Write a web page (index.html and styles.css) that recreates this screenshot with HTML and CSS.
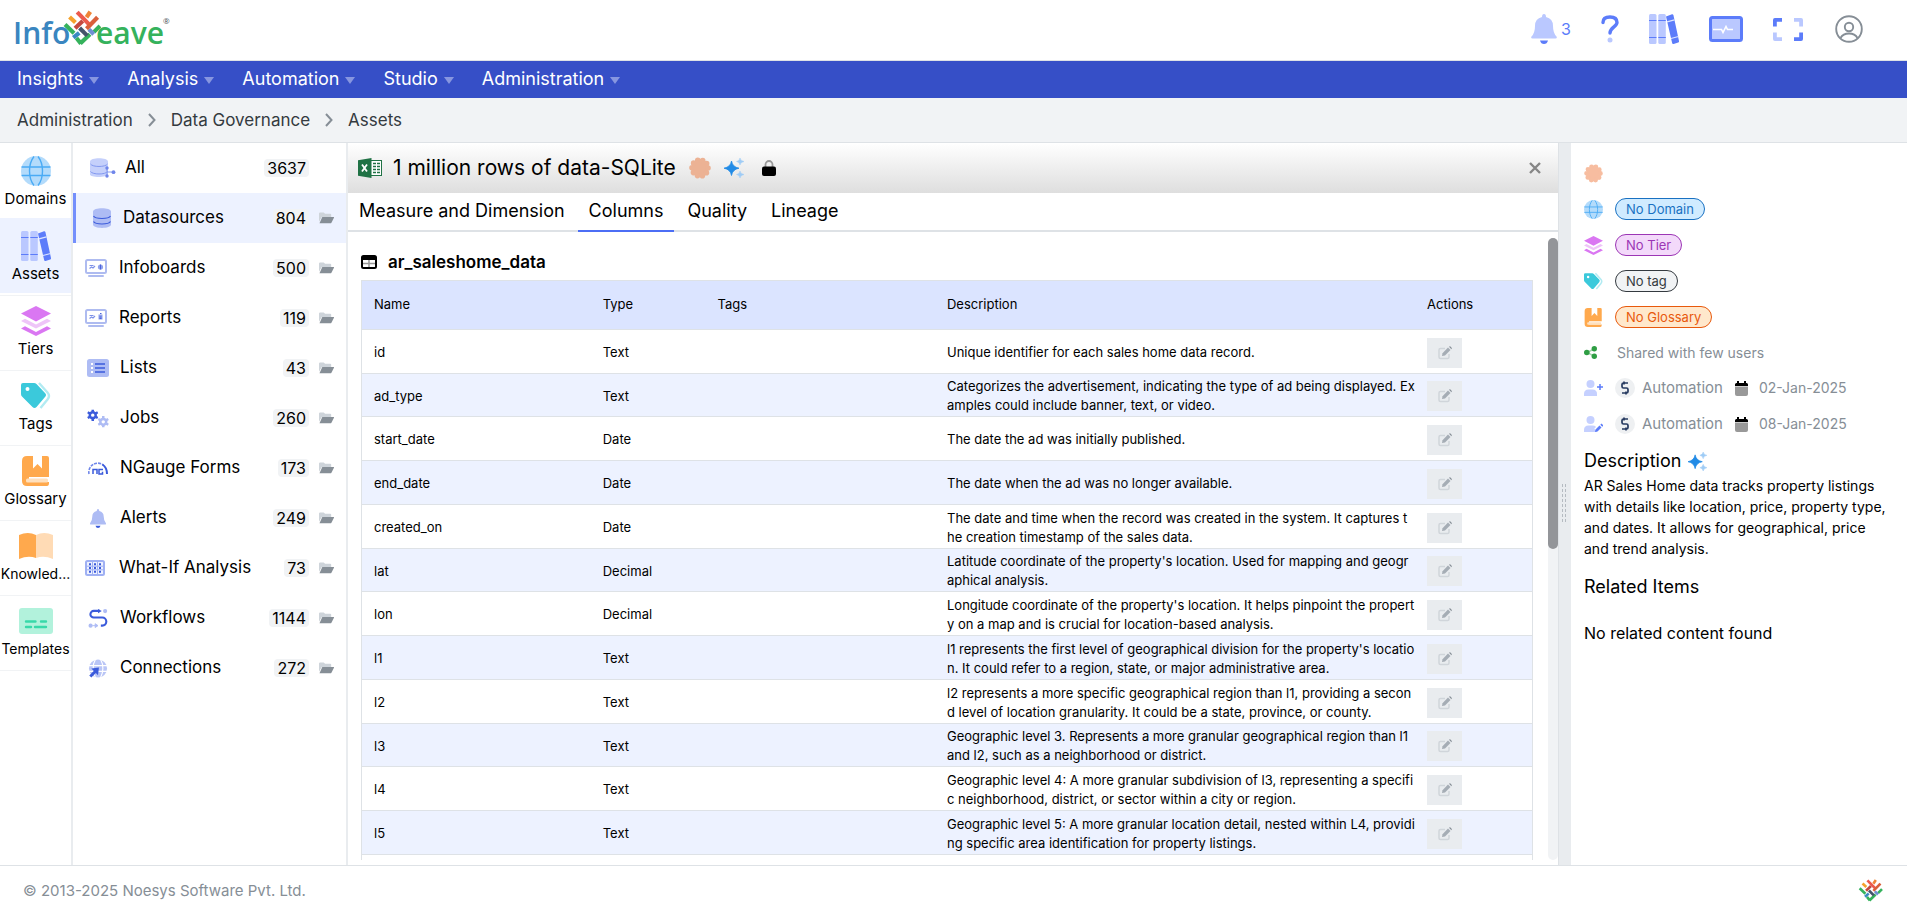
FILE: index.html
```html
<!DOCTYPE html>
<html lang="en">
<head>
<meta charset="utf-8">
<title>Infoveave - Assets</title>
<link rel="stylesheet" href="styles.css">
</head>
<body>
<svg class="sprite" aria-hidden="true">
  <symbol id="weave" viewBox="166 20 108 104">
    <g fill="none" stroke-width="12">
      <path stroke="#f5a12c" d="M184 40l17 16"/>
      <path stroke="#ec5a4c" d="M206 26l36 37"/>
      <path stroke="#ef8536" d="M244 25l-11 16"/>
      <path stroke="#d9603b" d="M265 41l-32 33"/>
      <path stroke="#c4483f" d="M222 52l-22 21"/>
      <path stroke="#35b25c" d="M171 62l26 25"/>
      <path stroke="#35b25c" d="M272 66l-18 18M204 101l13 16M243 90l-28 27"/>
      <path stroke="#44546a" d="M213 72l22 22"/>
      <path stroke="#3a8ac2" d="M212 86l-17 14"/>
      <path stroke="#6f8fd2" d="M240 76l14 14"/>
    </g>
  </symbol>
  <symbol id="globe" viewBox="0 0 30 30">
    <circle cx="15" cy="15" r="15" fill="#b3dbfb"/>
    <path d="M0.5 11h29M0.5 19.500h29M13 .5C7 8 7 22 13 29.500M17 .5c6 7.500 6 21.500 0 29" fill="none" stroke="#4aabf5" stroke-width="1.400"/>
  </symbol>
  <symbol id="books" viewBox="0 0 30 30">
    <g fill="var(--soft)"><rect x="0" y="0" width="7.500" height="30" rx="1.500"/><rect x="9.300" y="0" width="7.500" height="30" rx="1.500"/></g>
    <path d="M0 6.500h7.500M9.300 6.500h7.500M0 23.500h7.500M9.300 23.500h7.500" stroke="var(--strong)" stroke-width="1.200"/>
    <path d="M17 2.600L23 .3q1-.3 1.400.8L30 27q.2 1.200-.8 1.500L24.600 30q-1 .2-1.400-.8z" fill="var(--strong)"/>
    <path d="M18 7.800l7.500-2M22 24.500l7.500-2" stroke="#dbe4ff" stroke-width="1.200"/>
  </symbol>
  <symbol id="layers" viewBox="0 0 30 30">
    <path d="M0 22.500l4-2.300L15 26l11-5.800 4 2.300L15 30z" fill="#da77f2"/>
    <path d="M0 15l4-2.300 11 5.800 11-5.800 4 2.300-15 7.500z" fill="#eec5f8"/>
    <path d="M15 0l15 7.500L15 15.500 0 7.500z" fill="#da77f2"/>
  </symbol>
  <symbol id="tags" viewBox="0 0 30 30">
    <path d="M18 2l8.500 9.500q3 3.500 0 7L19.500 27" fill="none" stroke="#b2ebf2" stroke-width="2.400"/>
    <path fill-rule="evenodd" d="M2 2h11q1.500 0 2.500 1l8.500 9q2 2 0 4L15.500 26q-2 2-4 0L1 15.500Q0 14.500 0 13V4q0-2 2-2zm4.500 4a2 2 0 100 4 2 2 0 000-4z" fill="#3bc9db"/>
  </symbol>
  <symbol id="glossary" viewBox="0 0 30 30">
    <path d="M6 0h6v12.500l4.500-4.500 4.500 4.500V0h5q2 0 2 2v19H8v5h20v1q0 3-2 3H6q-5 0-5-5V5q0-5 5-5z" fill="#ffa94d"/>
    <rect x="5" y="22.500" width="22" height="4" rx="1.500" fill="#ffe0bd"/>
  </symbol>
  <symbol id="openbook" viewBox="0 0 34 26">
    <path d="M0 2Q9-2 17 2v23Q9 22 0 26z" fill="#ffa94d"/><path d="M17 2q8-4 17 0v24q-9-4-17-1z" fill="#ffdbb5"/>
  </symbol>
  <symbol id="template" viewBox="0 0 34 26">
    <rect width="34" height="26" rx="3" fill="#b2f2dc"/>
    <path d="M7 13.500h9.500M22 13.500h5M7 19h5M16 19h11" stroke="#38d9a9" stroke-width="2.400" stroke-linecap="round"/>
  </symbol>
  <symbol id="db" viewBox="0 0 18 20">
    <path d="M0 3.500C0-1 18-1 18 3.500v13c0 4.500-18 4.500-18 0z" fill="var(--soft)"/>
    <path d="M.5 8c2 3.300 15 3.300 17 0M.5 13.500c2 3.300 15 3.300 17 0" fill="none" stroke="var(--strong)" stroke-width="1.200"/>
  </symbol>
  <symbol id="dball" viewBox="0 0 26 20">
    <path d="M0 3.500C0-1 18-1 18 3.500v13c0 3-18 3.500-18 0z" fill="#c5d0fb"/>
    <path d="M.5 6c2 3.300 15 3.300 17 0M.5 13.500c2 3.300 15 3.300 17 0M17 10v8M17 14h6" fill="none" stroke="#8399f0" stroke-width="1"/>
    <circle cx="17" cy="10" r="1.700" fill="#7086ea"/><circle cx="17" cy="18" r="1.700" fill="#7086ea"/><circle cx="23.500" cy="14.200" r="1.900" fill="#7086ea"/>
  </symbol>
  <symbol id="board" viewBox="0 0 22 18">
    <rect x="1" y="1" width="20" height="13" rx="1.500" fill="#fff" stroke="#aebbf0" stroke-width="2"/>
    <path d="M4 17h14" stroke="#aebbf0" stroke-width="2" stroke-linecap="round"/>
    <path d="M4.500 9.500l2-1.500 1.500 1 2-2M4.500 6.500h4" fill="none" stroke="#7d91e8" stroke-width="1.200"/>
  </symbol>
  <symbol id="list" viewBox="0 0 22 18">
    <rect width="22" height="18" rx="2.500" fill="#aebcf4"/>
    <path d="M8 5h10M8 9h10M8 13h10" stroke="#3b5bdb" stroke-width="1.500"/><path d="M4 5h2M4 9h2M4 13h2" stroke="#fff" stroke-width="2"/>
  </symbol>
  <symbol id="gear" viewBox="0 0 12 12">
    <circle cx="6" cy="6" r="3.100" fill="none" stroke="currentColor" stroke-width="2.600"/>
    <path d="M6 0v2.500M6 9.500V12M.8 3l2.200 1.300M9 7.700L11.200 9M.8 9L3 7.700M9 4.300L11.200 3" stroke="currentColor" stroke-width="2.600"/>
  </symbol>
  <symbol id="jobs" viewBox="0 0 23 19">
    <use href="#gear" x="0" y="0" width="12" height="12" color="#3b5bdb"/><use href="#gear" x="11" y="7" width="12" height="12" color="#aebcf4"/>
  </symbol>
  <symbol id="gauge" viewBox="0 0 20 13">
    <path d="M1 12A9 9 0 0115 2.800" fill="none" stroke="#6f86ea" stroke-width="1.600" stroke-dasharray="3 1"/><path d="M14.500 2.500Q19 5.500 19 12" fill="none" stroke="#3b5bdb" stroke-width="2"/>
    <path d="M5 12V7.500h4V12M15 7.500h-4V12h3.500V9.800" fill="none" stroke="#3b5bdb" stroke-width="1.500"/>
  </symbol>
  <symbol id="bell" viewBox="0 0 26 30">
    <path d="M13 0q2 0 2 3 7 1.500 7 9 0 7 3.500 10.500 1 2-1 2h-23q-2 0-1-2Q4 19 4 12q0-7.500 7-9 0-3 2-3z" fill="var(--soft)"/>
    <path d="M9 26.500h8q-1 3.500-4 3.500t-4-3.500z" fill="var(--strong)"/>
  </symbol>
  <symbol id="whatif" viewBox="0 0 20 16">
    <rect x="1" y="1" width="18" height="14" rx="1.500" fill="#eef1fe" stroke="#9fb0f3" stroke-width="2"/>
    <path d="M2 6.200h16M2 9.800h16M7.500 2v12M12.500 2v12" stroke="#9fb0f3"/>
    <path d="M4 4.200h2M9 4.200h2M14 4.200h2M4 8h2M9 8h2M14 8h2M4 11.800h2M9 11.800h2M14 11.800h2" stroke="#3b5bdb" stroke-width="2"/>
  </symbol>
  <symbol id="flow" viewBox="0 0 20 20">
    <path d="M12 2H5.500a3.500 3.500 0 000 7h9a4 4 0 010 8.500H13" fill="none" stroke="#3b5bdb" stroke-width="2.200"/><path d="M10 0L14 2l-4 2.500z" fill="#3b5bdb"/>
    <circle cx="17.500" cy="2.200" r="2.200" fill="#aebcf4"/><circle cx="2.200" cy="17.500" r="2.200" fill="#aebcf4"/><path d="M4 17.500h4M7 15.500l3 2-3 2z" stroke="#aebcf4" fill="#aebcf4"/>
  </symbol>
  <symbol id="connect" viewBox="0 0 20 20">
    <circle cx="10" cy="10" r="9.500" fill="#b9c5f6"/><path d="M0 7h20M0 13h20M7.500 0c-3.500 6-3.500 14 0 20M12.500 0c3.500 6 3.500 14 0 20" fill="none" stroke="#fff" stroke-width="1.200"/>
    <path d="M3 10l8-1-1 8-2.300-2.300L3 19.500 .8 17.300l4.700-4.700z" fill="#3b5bdb"/>
  </symbol>
  <symbol id="folder" viewBox="0 0 16 12">
    <path d="M0 1.200Q0 0 1.200 0H5l1.500 1.500H12q1 0 1 1V5H3L0 10z" fill="#ced4da"/><path d="M3.500 4.800h12q.8 0 .4.900l-2.500 5q-.5 1-1.400 1H.5z" fill="#868e96"/>
  </symbol>
  <symbol id="excel" viewBox="0 0 24 20">
    <rect x="12" y="2.500" width="11.500" height="15" fill="#fff" stroke="#207245"/><path d="M15 5.500h7M15 8.500h7M15 11.500h7M15 14.500h7" stroke="#207245" stroke-width="1.600" stroke-dasharray="3 1"/>
    <path d="M0 2.200L13.500 0v20L0 17.800z" fill="#207245"/><path d="M4 6.500l5 7M9 6.500l-5 7" stroke="#fff" stroke-width="1.800"/>
  </symbol>
  <symbol id="badge" viewBox="0 0 22 22">
    <circle cx="11" cy="11" r="8" fill="currentColor" stroke="currentColor" stroke-width="5.600" stroke-linecap="round" stroke-dasharray="0 5.027"/>
  </symbol>
  <symbol id="sparkle" viewBox="0 0 20 20">
    <path d="M7.500 3q1 6 7.500 7.200-6.500 1.200-7.500 7.300Q6.500 11.400 0 10.200 6.500 9 7.500 3z" fill="#228be6" stroke="#228be6" stroke-width=".8"/>
    <path d="M16 0q.5 3 4 3.500-3.500.5-4 3.500-.5-3-3.500-3.500Q15.500 3 16 0zM16 13q.5 3 4 3.500-3.500.5-4 3.500-.5-3-3.500-3.500 3-.5 3.500-3.500z" fill="#9fccf6" stroke="#9fccf6" stroke-width=".5"/>
  </symbol>
  <symbol id="edit" viewBox="0 0 14 14">
    <path d="M7 2.500H2.500q-1.500 0-1.500 1.500v7q0 1.500 1.500 1.500h7q1.500 0 1.500-1.500V8" fill="none" stroke="#d0d5da" stroke-width="1.500"/><path d="M4 10l.5-2.800L10 1.500 12.500 4 7 9.500z" fill="#a5adb5"/><path d="M11 .8q1-.9 1.800 0l.6.600q.8.900 0 1.800z" fill="#868e96"/>
  </symbol>
  <symbol id="person" viewBox="0 0 19 16">
    <circle cx="6.500" cy="4" r="4" fill="#c5d0ff"/><path d="M0 16v-2q0-4.500 4.500-4.500h4q4.500 0 4.500 4.500v2z" fill="#c5d0ff"/>
  </symbol>
  <symbol id="avatar" viewBox="0 0 20 20">
    <circle cx="10" cy="10" r="10" fill="#eef0f2"/><path d="M13 5H8.500Q7 5 7 6.500v2Q7 10 8.500 10h3q1.500 0 1.500 1.500v2q0 1.500-1.500 1.500H7M9 3.500v3M11 13.500v3" fill="none" stroke="#263a60" stroke-width="1.700"/>
  </symbol>
  <symbol id="calendar" viewBox="0 0 13 15">
    <path d="M0 5.500h13V13q0 2-2 2H2q-2 0-2-2z" fill="#999"/><path d="M0 5V3.500Q0 2 1.500 2H2V0h2v2h5V0h2v2h.500Q13 2 13 3.500V5z"/>
  </symbol>
</svg>

<header class="topbar">
  <a class="logo" href="#" aria-label="Infoveave home">
    <svg width="160" height="52" viewBox="0 0 160 52">
      <text class="logo-text" x="0" y="40" fill="#3a86c0">Info</text>
      <text class="logo-text" x="83" y="40" fill="#35b25c">eave</text>
      <text class="logo-mark" x="150" y="20">®</text>
      <use href="#weave" x="50" y="6" width="38" height="36"/>
    </svg>
  </a>
  <div class="tools">
    <button class="tool tool-bell" aria-label="Notifications"><svg width="26" height="30"><use href="#bell"/></svg><span class="count-note">3</span></button>
    <button class="tool" aria-label="Help"><svg width="18" height="28" viewBox="0 0 18 28"><path d="M2 7.500Q2 2 9 2t7 5.500c0 4-7 5-7 10.500" fill="none" stroke="#5c7cfa" stroke-width="3.400" stroke-linecap="round"/><circle cx="9" cy="25" r="2.500" fill="#bac8ff"/></svg></button>
    <button class="tool" aria-label="Library"><svg width="30" height="30"><use href="#books"/></svg></button>
    <button class="tool" aria-label="Monitor"><svg width="34" height="26" viewBox="0 0 34 26"><rect x="1.500" y="1.500" width="31" height="23" rx="2" fill="#bac8ff" stroke="#5c7cfa" stroke-width="3"/><path d="M4 13.500h8.500l1.500 3 3-6 1.500 3H24" fill="none" stroke="#fff" stroke-width="1.600"/></svg></button>
    <button class="tool" aria-label="Full screen"><svg width="30" height="23" viewBox="0 0 30 23"><g fill="none" stroke-width="3.800" stroke-linejoin="round"><path d="M1.900 8.500V1.900H9M28.100 14.500v6.600H21" stroke="#5c7cfa"/><path d="M21 1.900h7.100v6.600M1.900 14.500v6.600H9" stroke="#bac8ff"/></g></svg></button>
    <button class="tool account" aria-label="Account"><svg width="28" height="28" viewBox="0 0 28 28"><g fill="none" stroke="#868e96" stroke-width="1.900"><circle cx="14" cy="14" r="12.800"/><circle cx="14" cy="12" r="4.200"/><path d="M5.500 23q2.500-4.500 8.500-4.500t8.500 4.500"/></g></svg></button>
  </div>
</header>

<nav class="menu">
  <button>Insights</button><button>Analysis</button><button>Automation</button><button>Studio</button><button>Administration</button>
</nav>

<nav class="crumbs" aria-label="Breadcrumb">
  <a href="#">Administration</a>
  <svg width="8" height="14" viewBox="0 0 8 14"><path d="M1 1l5.500 6L1 13"/></svg>
  <a href="#">Data Governance</a>
  <svg width="8" height="14" viewBox="0 0 8 14"><path d="M1 1l5.500 6L1 13"/></svg>
  <a href="#">Assets</a>
</nav>

<div class="workspace">
  <nav class="rail">
    <a href="#"><svg width="30" height="30"><use href="#globe"/></svg><span>Domains</span></a>
    <a href="#" class="current"><svg width="30" height="30"><use href="#books"/></svg><span>Assets</span></a>
    <a href="#"><svg width="30" height="30"><use href="#layers"/></svg><span>Tiers</span></a>
    <a href="#"><svg width="30" height="30"><use href="#tags"/></svg><span>Tags</span></a>
    <a href="#"><svg width="30" height="30"><use href="#glossary"/></svg><span>Glossary</span></a>
    <a href="#" class="long"><svg width="34" height="30"><use href="#openbook"/></svg><span>Knowled...</span></a>
    <a href="#" class="long"><svg width="34" height="30"><use href="#template"/></svg><span>Templates</span></a>
  </nav>

  <nav class="kinds">
    <a href="#" class="all"><svg width="26" height="20"><use href="#dball"/></svg><span>All</span><b>3637</b></a>
    <a href="#" class="current"><svg width="18" height="20"><use href="#db"/></svg><span>Datasources</span><b>804</b><svg class="folder"><use href="#folder"/></svg></a>
    <a href="#" class="screen"><svg width="22" height="18" viewBox="0 0 22 18"><use href="#board"/><circle cx="15.500" cy="8" r="2.600" fill="#8fa1ec"/><path d="M15.500 5.500v5" stroke="#4c63dc"/></svg><span>Infoboards</span><b>500</b><svg class="folder"><use href="#folder"/></svg></a>
    <a href="#" class="screen"><svg width="22" height="18" viewBox="0 0 22 18"><use href="#board"/><path d="M13.500 5.500h4v5h-4z" fill="#8fa1ec"/><path d="M15 4.500h1.500M14.500 8h2M14.500 9.500h2" stroke="#4c63dc"/></svg><span>Reports</span><b>119</b><svg class="folder"><use href="#folder"/></svg></a>
    <a href="#"><svg width="22" height="18"><use href="#list"/></svg><span>Lists</span><b>43</b><svg class="folder"><use href="#folder"/></svg></a>
    <a href="#"><svg width="22" height="19"><use href="#jobs"/></svg><span>Jobs</span><b>260</b><svg class="folder"><use href="#folder"/></svg></a>
    <a href="#"><svg width="22" height="13"><use href="#gauge"/></svg><span>NGauge Forms</span><b>173</b><svg class="folder"><use href="#folder"/></svg></a>
    <a href="#"><svg width="22" height="19"><use href="#bell"/></svg><span>Alerts</span><b>249</b><svg class="folder"><use href="#folder"/></svg></a>
    <a href="#" class="screen"><svg width="22" height="16" viewBox="0 0 22 16"><use href="#whatif" width="20" height="16"/></svg><span>What-If Analysis</span><b>73</b><svg class="folder"><use href="#folder"/></svg></a>
    <a href="#"><svg width="22" height="19"><use href="#flow"/></svg><span>Workflows</span><b>1144</b><svg class="folder"><use href="#folder"/></svg></a>
    <a href="#"><svg width="22" height="19"><use href="#connect"/></svg><span>Connections</span><b>272</b><svg class="folder"><use href="#folder"/></svg></a>
  </nav>

  <main class="detail">
    <div class="titlebar">
      <svg width="24" height="20"><use href="#excel"/></svg>
      <h1>1 million rows of data-SQLite</h1>
      <svg class="badge" width="22" height="22"><use href="#badge"/></svg>
      <svg class="spark" width="20" height="20"><use href="#sparkle"/></svg>
      <svg width="14" height="16" viewBox="0 0 14 16"><path d="M3.500 7V4.500a3.500 3.500 0 017 0V7" fill="none" stroke="#999" stroke-width="1.800"/><rect y="6.500" width="14" height="9.500" rx="2"/></svg>
      <button class="close" aria-label="Close"><svg width="12" height="12" viewBox="0 0 12 12"><path d="M1 1l10 10M11 1L1 11" stroke="#868686" stroke-width="2.400"/></svg></button>
    </div>
    <div class="tabs">
      <button>Measure and Dimension</button><button class="current">Columns</button><button>Quality</button><button>Lineage</button>
    </div>
    <div class="scroller">
      <div class="content">
        <h2><svg width="16" height="14" viewBox="0 0 16 14"><rect x="1" y="1" width="14" height="12" rx="1.500" fill="#fff" stroke="#000" stroke-width="2"/><path d="M1 3.500h14" stroke="#000" stroke-width="3"/><path d="M8 5v7M2 8.500h12" stroke="#999" stroke-width="1.500"/></svg>ar_saleshome_data</h2>
        <table>
          <colgroup><col class="c-name"><col class="c-type"><col class="c-tags"><col class="c-desc"><col></colgroup>
          <thead><tr><th>Name</th><th>Type</th><th>Tags</th><th>Description</th><th>Actions</th></tr></thead>
          <tbody>
            <tr><td>id</td><td>Text</td><td></td><td>Unique identifier for each sales home data record.</td><td><button aria-label="Edit"><svg><use href="#edit"/></svg></button></td></tr>
            <tr><td>ad_type</td><td>Text</td><td></td><td>Categorizes the advertisement, indicating the type of ad being displayed. Ex<br>amples could include banner, text, or video.</td><td><button aria-label="Edit"><svg><use href="#edit"/></svg></button></td></tr>
            <tr><td>start_date</td><td>Date</td><td></td><td>The date the ad was initially published.</td><td><button aria-label="Edit"><svg><use href="#edit"/></svg></button></td></tr>
            <tr><td>end_date</td><td>Date</td><td></td><td>The date when the ad was no longer available.</td><td><button aria-label="Edit"><svg><use href="#edit"/></svg></button></td></tr>
            <tr><td>created_on</td><td>Date</td><td></td><td>The date and time when the record was created in the system. It captures t<br>he creation timestamp of the sales data.</td><td><button aria-label="Edit"><svg><use href="#edit"/></svg></button></td></tr>
            <tr><td>lat</td><td>Decimal</td><td></td><td>Latitude coordinate of the property's location. Used for mapping and geogr<br>aphical analysis.</td><td><button aria-label="Edit"><svg><use href="#edit"/></svg></button></td></tr>
            <tr><td>lon</td><td>Decimal</td><td></td><td>Longitude coordinate of the property's location. It helps pinpoint the propert<br>y on a map and is crucial for location-based analysis.</td><td><button aria-label="Edit"><svg><use href="#edit"/></svg></button></td></tr>
            <tr><td>l1</td><td>Text</td><td></td><td>l1 represents the first level of geographical division for the property's locatio<br>n. It could refer to a region, state, or major administrative area.</td><td><button aria-label="Edit"><svg><use href="#edit"/></svg></button></td></tr>
            <tr><td>l2</td><td>Text</td><td></td><td>l2 represents a more specific geographical region than l1, providing a secon<br>d level of location granularity. It could be a state, province, or county.</td><td><button aria-label="Edit"><svg><use href="#edit"/></svg></button></td></tr>
            <tr><td>l3</td><td>Text</td><td></td><td>Geographic level 3. Represents a more granular geographical region than l1<br>and l2, such as a neighborhood or district.</td><td><button aria-label="Edit"><svg><use href="#edit"/></svg></button></td></tr>
            <tr><td>l4</td><td>Text</td><td></td><td>Geographic level 4: A more granular subdivision of l3, representing a specifi<br>c neighborhood, district, or sector within a city or region.</td><td><button aria-label="Edit"><svg><use href="#edit"/></svg></button></td></tr>
            <tr><td>l5</td><td>Text</td><td></td><td>Geographic level 5: A more granular location detail, nested within L4, providi<br>ng specific area identification for property listings.</td><td><button aria-label="Edit"><svg><use href="#edit"/></svg></button></td></tr>
            <tr><td></td><td></td><td></td><td></td><td></td></tr>
          </tbody>
        </table>
      </div>
      <div class="track"><div class="thumb"></div></div>
    </div>
  </main>

  <div class="splitter"><i></i></div>

  <aside class="info">
    <div class="row"><svg class="badge" width="19" height="19"><use href="#badge"/></svg></div>
    <div class="row"><svg width="19" height="19"><use href="#globe"/></svg><span class="chip domain">No Domain</span></div>
    <div class="row"><svg width="19" height="19"><use href="#layers"/></svg><span class="chip tier">No Tier</span></div>
    <div class="row"><svg width="19" height="19"><use href="#tags"/></svg><span class="chip tag">No tag</span></div>
    <div class="row"><svg width="19" height="19"><use href="#glossary"/></svg><span class="chip gloss">No Glossary</span></div>
    <div class="row muted share"><svg width="19" height="13" viewBox="0 0 19 13"><path d="M10 3L3 6.500l7 3.500" fill="none" stroke="#a5d6ad" stroke-width="1.500"/><g fill="#2f9e44"><circle cx="2.800" cy="6.500" r="2.800"/><circle cx="10.300" cy="2.700" r="2.700"/><circle cx="10.300" cy="10.300" r="2.700"/></g></svg><span class="shared">Shared with few users</span></div>
    <div class="row muted"><svg width="19" height="16" viewBox="0 0 19 16"><use href="#person"/><path d="M16 4v6M13 7h6" stroke="#5c7cfa" stroke-width="1.500"/></svg><svg class="face" width="20" height="20"><use href="#avatar"/></svg><span class="who">Automation</span><svg width="13" height="15"><use href="#calendar"/></svg><span class="when">02-Jan-2025</span></div>
    <div class="row muted"><svg width="19" height="16" viewBox="0 0 19 16"><use href="#person"/><path d="M12 14.500l5.500-5.500" stroke="#fff" stroke-width="5"/><path d="M11 16l.5-2.500 4-4 2 2-4 4zM16.300 8.700l1.200-1.200 2 2-1.200 1.200z" fill="#5c7cfa"/></svg><svg class="face" width="20" height="20"><use href="#avatar"/></svg><span class="who">Automation</span><svg width="13" height="15"><use href="#calendar"/></svg><span class="when">08-Jan-2025</span></div>
    <h3>Description <svg width="19" height="19"><use href="#sparkle"/></svg></h3>
    <p class="about">AR Sales Home data tracks property listings with details like location, price, property type, and dates. It allows for geographical, price and trend analysis.</p>
    <h3 class="related">Related Items</h3>
    <p class="empty">No related content found</p>
  </aside>
</div>

<footer class="foot"><span>© 2013-2025 Noesys Software Pvt. Ltd.</span><svg width="25" height="23"><use href="#weave"/></svg></footer>
</body>
</html>
```
FILE: styles.css
```css
* { box-sizing: border-box; }

:root { --soft: #bac8ff; --strong: #5c7cfa; }

body {
  margin: 0;
  height: 100vh;
  display: flex;
  flex-direction: column;
  overflow: hidden;
  font: 16px/24px Inter, sans-serif;
  color: #000;
  background: #fff;
}

h1, h2, h3, p { margin: 0; font-weight: 400; }
a { color: inherit; text-decoration: none; }
button { margin: 0; padding: 0; border: 0; background: none; font: inherit; color: inherit; cursor: pointer; }
svg { display: block; flex: none; }
.sprite { position: absolute; width: 0; height: 0; }

/* Top bar */
.topbar {
  flex: none;
  height: 61px;
  display: flex;
  align-items: center;
  justify-content: space-between;
  padding: 0 44px 0 13px;
  border-bottom: 1px solid #dee2e6;
}
.logo-text { font: 600 30px "Open Sans", sans-serif; }
.logo-mark { font: 8px "Open Sans", sans-serif; fill: #495057; }
.tools { display: flex; align-items: center; gap: 30px; padding-bottom: 2px; }
.tool { display: flex; align-items: center; }
.tool-bell { gap: 4px; }
.count-note { font-size: 16px; color: #5c7cfa; }
.account { margin-left: 2px; }

/* Main menu */
.menu {
  flex: none;
  height: 37px;
  display: flex;
  align-items: center;
  gap: 28px;
  padding: 0 17px 2px;
  background: #364fc7;
  color: #fff;
  font-size: 18px;
}
.menu button { display: flex; align-items: center; gap: 6px; }
.menu button::after {
  content: "";
  border: 5px solid transparent;
  border-top: 7px solid #8796e0;
  border-bottom: 0;
  margin-top: 3px;
}

.crumbs {
  flex: none;
  height: 45px;
  display: flex;
  align-items: center;
  gap: 15px;
  padding: 0 17px 1px;
  background: #f1f3f5;
  border-bottom: 1px solid #dee2e6;
  color: #343a40;
  font-size: 17px;
}
.crumbs path { fill: none; stroke: #868e96; stroke-width: 2; }

.workspace { flex: 1; min-height: 0; display: flex; }

/* Icon rail */
.rail { flex: none; width: 73px; border-right: 2px solid #e9ecef; overflow: hidden; }
.rail a {
  height: 75px;
  display: flex;
  flex-direction: column;
  align-items: center;
  justify-content: flex-start;
  gap: 1px;
  padding-top: 10px;
  border-top: 1px solid #f1f3f5;
  font-size: 15px;
}
.rail a:first-child { border-top-color: transparent; padding-top: 12px; }
.rail .current { background: #edf2ff; border-color: #edf2ff; margin-bottom: 2px; padding-top: 12px; }
.rail .long { font-size: 14px; }
.rail a:last-child { border-bottom: 1px solid #f1f3f5; height: 76px; }

/* Asset kinds */
.kinds { flex: none; width: 275px; border-right: 2px solid #e9ecef; --soft: #aebcf4; --strong: #3b5bdb; }
.kinds a {
  height: 50px;
  display: flex;
  align-items: center;
  padding: 0 12px 0 14px;
}
.kinds a > svg:first-child { margin-right: 11px; }
.kinds span { flex: 1; padding-bottom: 2px; font-size: 17px; }
.kinds b {
  font-weight: 400;
  line-height: 18px;
  padding: 0 3px;
  border-radius: 4px;
  background: #f1f3f5;
}
.kinds .folder { width: 15px; height: 12px; margin-left: 10px; }
.kinds .all { padding: 0 37px 0 17px; }
.kinds .all > svg:first-child { margin-right: 9px; }
.kinds .current { background: #edf2ff; border-left: 3px solid #748ffc; padding-left: 17px; }
.kinds .current > svg:first-child { margin-right: 12px; }
.kinds .screen { padding-left: 12px; }
.kinds .screen > svg:first-child { margin-right: 12px; }

/* Detail */
.detail { flex: 1; min-width: 0; display: flex; flex-direction: column; }
.titlebar {
  flex: none;
  height: 50px;
  display: flex;
  align-items: center;
  padding: 0 17px 0 10px;
  background: linear-gradient(#fff, #dedede);
}
.titlebar h1 { margin: 0 13px 0 11px; font-size: 21px; }
.badge { color: #f7bda0; }
.titlebar .badge { color: #ecb294; }
.titlebar .spark { margin: 0 18px 0 13px; }
.close { margin-left: auto; }
.tabs { flex: none; height: 39px; display: flex; gap: 2px; border-bottom: 2px solid #dee2e6; }
.tabs button { height: 39px; padding: 0 11px 2px; font-size: 18px; border-bottom: 2px solid transparent; }
.tabs .current { border-color: #4c6ef5; }

.scroller { flex: 1; min-height: 0; display: flex; padding: 6px 0 5px; }
.content { flex: 1; min-width: 0; overflow: hidden; padding: 12px 15px 0 13px; }
.content h2 { display: flex; align-items: center; gap: 11px; height: 24px; margin-bottom: 6px; font-size: 17px; font-weight: 600; }
.track { flex: none; width: 10px; border-radius: 5px; background: #f1f3f5; }
.thumb { height: 50%; border-radius: 5px; background: #939599; }

table { width: 100%; table-layout: fixed; border-collapse: collapse; border: 1px solid #dee2e6; font-size: 13px; line-height: 19px; }
.c-name { width: 20.600%; }
.c-type { width: 9.800%; }
.c-tags { width: 19.600%; }
.c-desc { width: 41%; }
th, td { padding: 0; text-align: left; font-weight: 400; white-space: nowrap; border-bottom: 1px solid #dee2e6; }
th:first-child, td:first-child { padding-left: 12px; }
th { background: #dbe4ff; height: 49px; padding-bottom: 1px; }
td { height: 44px; padding-top: 2px; }
tr:nth-child(4n+2) td { height: 43px; }
tbody tr:nth-child(even) { background: #edf2ff; }
td button { display: flex; align-items: center; justify-content: center; width: 35px; height: 30px; background: #e9ecef; }
td button svg { width: 14px; height: 14px; }

/* Splitter */
.splitter { flex: none; width: 13px; display: flex; align-items: center; justify-content: center; background: #e9ecef; border-left: 1px solid #dee2e6; }
.splitter i { width: 6px; height: 40px; background: conic-gradient(transparent 75%, #b5bbc1 0) 0 0 / 3px 5px; }

/* Info panel */
.info { flex: none; width: 336px; padding: 12px 16px 0 13px; }
.row { height: 36px; display: flex; align-items: center; }
.chip { margin-left: 12px; padding: 0 10px; border: 1px solid; border-radius: 11px; font-size: 13px; line-height: 20px; }
.domain { color: #1971c2; background: #d0ebff; }
.tier { color: #9c36b5; background: #f3d9fa; }
.tag { color: #343a40; background: #f1f3f5; }
.gloss { color: #e8590c; background: #ffe8cc; }
.muted { color: #868e96; font-size: 14px; }
.share { height: 35px; }
.shared { margin-left: 14px; }
.face { margin: 0 7px 0 12px; }
.who { margin-right: 12px; font-size: 15px; }
.when { margin-left: 11px; }
.info h3 { display: flex; align-items: center; gap: 7px; height: 24px; margin-top: 7px; font-size: 18px; }
.about { font-size: 14px; line-height: 21px; margin-top: 2px; }
.info .related { margin-top: 16px; }
.empty { margin-top: 22px; font-size: 16px; }

/* Footer */
.foot {
  flex: none;
  height: 52px;
  display: flex;
  align-items: center;
  justify-content: space-between;
  padding: 0 24px 2px 23px;
  border-top: 1px solid #dee2e6;
  color: #868e96;
  font-size: 15px;
}
```
